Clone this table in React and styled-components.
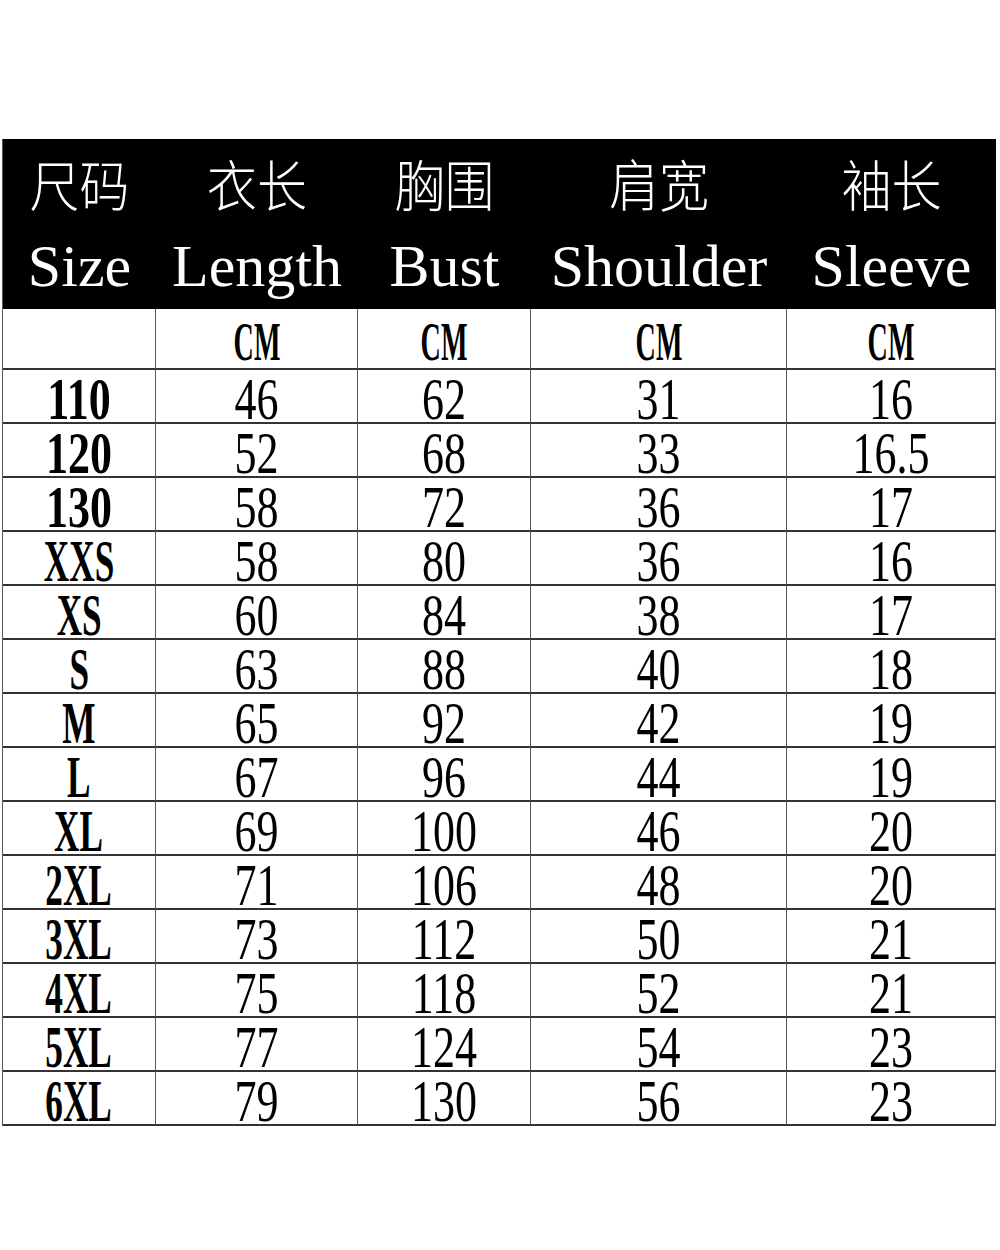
import React from 'react';
import styled, { createGlobalStyle } from 'styled-components';

const GlobalStyle = createGlobalStyle`
  html, body {
    margin: 0;
    padding: 0;
    background: #ffffff;
  }
  body {
    font-family: "Liberation Serif", "Times New Roman", serif;
  }
`;

const Page = styled.div`
  width: 1000px;
  height: 1250px;
  padding: 139px 0 0 2px;
  box-sizing: border-box;
  background: #fff;
`;

const Table = styled.div`
  display: grid;
  grid-template-columns: 153px 202px 173px 256px 209px;
  grid-template-rows: 170px 61px repeat(14, 54px);
  width: 993px;
  border-left: 1.5px solid #555;
  box-sizing: border-box;
`;

const HeadCell = styled.div`
  background: #000;
  color: #fff;
  display: flex;
  flex-direction: column;
  align-items: center;
  justify-content: flex-start;
  gap: 24px;
  padding-top: 13px;
  box-sizing: border-box;
`;

const HeadZh = styled.span`
  font-family: "Noto Sans CJK SC", "Noto Sans", sans-serif;
  font-size: 50px;
  line-height: 60px;
  font-weight: 300;
  display: inline-block;
  transform: scaleY(1.1);
`;

const HeadEn = styled.span`
  font-family: "Liberation Serif", serif;
  font-size: 60px;
  line-height: 60px;
  display: inline-block;
`;

const Cell = styled.div`
  display: flex;
  align-items: center;
  justify-content: center;
  border-right: 1.5px solid #555;
  border-bottom: 2px solid #333;
  box-sizing: border-box;
  color: #000;
`;

const Unit = styled.span`
  font-family: "Liberation Serif", serif;
  font-weight: 700;
  font-size: 36px;
  line-height: 26px;
  display: inline-block;
  transform: translateY(3px) scale(0.78, 1.5);
`;

const Value = styled.span`
  font-family: "Liberation Serif", serif;
  font-weight: ${(p) => (p.$bold ? 700 : 400)};
  font-size: 44px;
  line-height: 30px;
  display: inline-block;
  transform: translateY(5px) scale(${(p) => (p.$condense ? 0.8 : 1)}, 1.32);
`;

const headers = [
  ['尺码', 'Size'],
  ['衣长', 'Length'],
  ['胸围', 'Bust'],
  ['肩宽', 'Shoulder'],
  ['袖长', 'Sleeve'],
];

const rows = [
  ['110', '46', '62', '31', '16'],
  ['120', '52', '68', '33', '16.5'],
  ['130', '58', '72', '36', '17'],
  ['XXS', '58', '80', '36', '16'],
  ['XS', '60', '84', '38', '17'],
  ['S', '63', '88', '40', '18'],
  ['M', '65', '92', '42', '19'],
  ['L', '67', '96', '44', '19'],
  ['XL', '69', '100', '46', '20'],
  ['2XL', '71', '106', '48', '20'],
  ['3XL', '73', '112', '50', '21'],
  ['4XL', '75', '118', '52', '21'],
  ['5XL', '77', '124', '54', '23'],
  ['6XL', '79', '130', '56', '23'],
];

export default function App() {
  return (
    <Page>
      <GlobalStyle />
      <Table>
        {headers.map(([zh, en]) => (
          <HeadCell key={en}>
            <HeadZh>{zh}</HeadZh>
            <HeadEn>{en}</HeadEn>
          </HeadCell>
        ))}
        {headers.map(([, en], i) => (
          <Cell key={'u' + en}>{i > 0 && <Unit>CM</Unit>}</Cell>
        ))}
        {rows.map((row) =>
          row.map((v, i) => (
            <Cell key={row[0] + i}>
              <Value $bold={i === 0} $condense={i === 0 && /[A-Z]/.test(v)}>
                {v}
              </Value>
            </Cell>
          ))
        )}
      </Table>
    </Page>
  );
}
